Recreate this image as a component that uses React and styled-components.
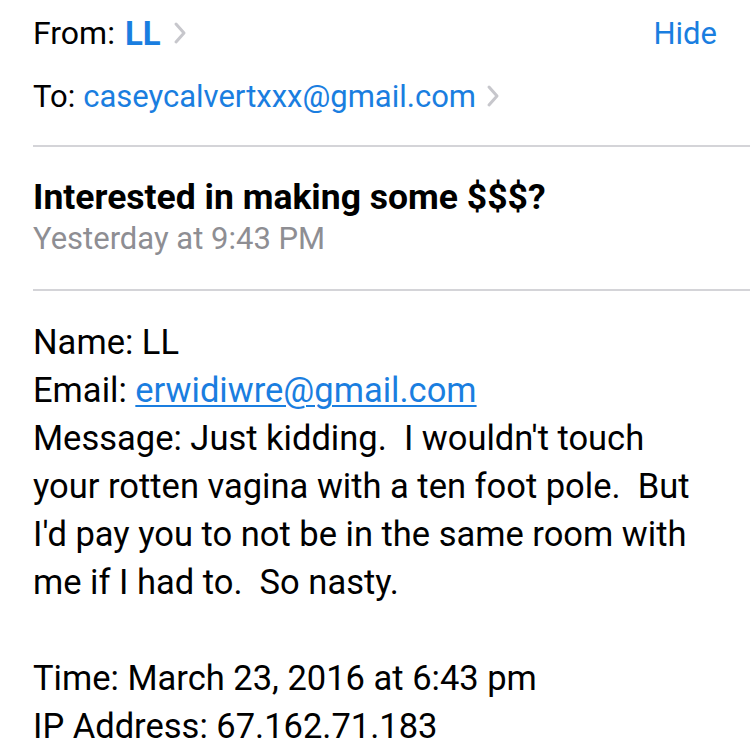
import styled, { createGlobalStyle } from "styled-components";

const GlobalStyle = createGlobalStyle`
  html, body {
    margin: 0;
    padding: 0;
    background: #fff;
  }
  body {
    font-family: Roboto, "Liberation Sans", sans-serif;
    color: #000;
  }
`;

const Page = styled.div`
  width: 750px;
  height: 750px;
  overflow: hidden;
  padding-left: 33px;
  box-sizing: border-box;
`;

const HeaderRow = styled.div`
  display: flex;
  align-items: center;
  justify-content: space-between;
  height: ${(p) => p.$h}px;
  padding-right: 33px;
  font-size: 31px;
`;

const Field = styled.div`
  display: flex;
  align-items: center;
  gap: ${(p) => p.$gap || 8}px;
`;

const Label = styled.span`
  color: #000;
  font-size: ${(p) => p.$size || 31}px;
`;

const Blue = styled.span`
  color: #1a7ee0;
  font-weight: ${(p) => (p.$bold ? 700 : 400)};
  font-size: ${(p) => p.$size || 31}px;
`;

const Chevron = () => (
  <svg width="14" height="24" viewBox="0 0 14 24" style={{ marginLeft: 2 }}>
    <path d="M3 3 L11 12 L3 21" fill="none" stroke="#c7c7cc" strokeWidth="3" strokeLinecap="round" strokeLinejoin="round" />
  </svg>
);

const Divider = styled.div`
  height: 2px;
  background: #d4d4d8;
`;

const SubjectBlock = styled.div`
  padding: 29px 0 29px;
`;

const Subject = styled.div`
  font-size: 35.5px;
  font-weight: 700;
  line-height: 42px;
`;

const Date = styled.div`
  font-size: 31px;
  color: #8e8e93;
  line-height: 42px;
`;

const Body = styled.div`
  padding-top: 27px;
  font-size: 34.5px;
  line-height: 48px;
  white-space: pre;
`;

const Link = styled.a`
  color: #1a7ee0;
  text-decoration: underline;
  text-underline-offset: 3px;
  text-decoration-thickness: 1.5px;
`;

const Line = styled.div`
  height: 48px;
`;

export default function App() {
  return (
    <>
      <GlobalStyle />
      <Page>
        <HeaderRow $h={66}>
          <Field $gap={10}>
            <Label $size={32}>From:</Label>
            <Blue $bold $size={33}>LL</Blue>
            <Chevron />
          </Field>
          <Blue>Hide</Blue>
        </HeaderRow>
        <HeaderRow $h={60}>
          <Field>
            <Label>To:</Label>
            <Blue>caseycalvertxxx@gmail.com</Blue>
            <Chevron />
          </Field>
        </HeaderRow>
        <div style={{ height: 19 }} />
        <Divider />
        <SubjectBlock>
          <Subject>Interested in making some $$$?</Subject>
          <Date>Yesterday at 9:43 PM</Date>
        </SubjectBlock>
        <Divider />
        <Body>
          <Line>Name: LL</Line>
          <Line>
            Email: <Link>erwidiwre@gmail.com</Link>
          </Line>
          <Line>Message: Just kidding.  I wouldn't touch</Line>
          <Line>your rotten vagina with a ten foot pole.  But</Line>
          <Line>I'd pay you to not be in the same room with</Line>
          <Line>me if I had to.  So nasty.</Line>
          <Line />
          <Line>Time: March 23, 2016 at 6:43 pm</Line>
          <Line>IP Address: 67.162.71.183</Line>
        </Body>
      </Page>
    </>
  );
}
